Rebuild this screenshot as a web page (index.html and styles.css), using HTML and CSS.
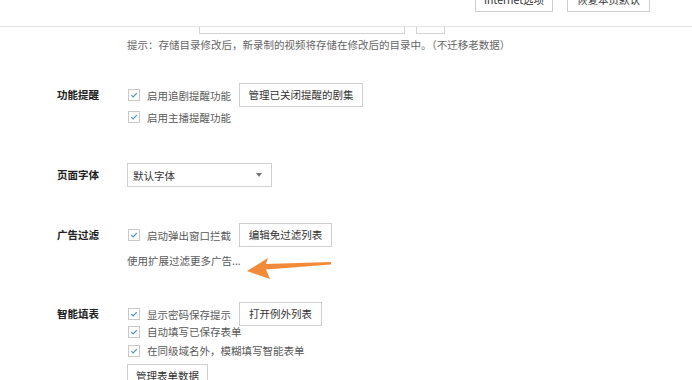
FILE: index.html
```html
<!DOCTYPE html>
<html lang="zh-CN">
<head>
    <meta charset="UTF-8">
    <title>设置</title>
    <link rel="stylesheet" href="styles.css">
</head>
<body>

<div class="topbar">
    <button class="btn btn-top">Internet选项</button>
    <button class="btn btn-top">恢复本页默认</button>
</div>

<div class="conteudo">
    <div class="linha-dir">
        <div class="caixa-dir"></div>
        <div class="caixa-mudar"></div>
    </div>
    <div class="dica">提示：存储目录修改后，新录制的视频将存储在修改后的目录中。（不迁移老数据）</div>

    <div class="secao s1">
        <div class="rotulo">功能提醒</div>
        <div class="opcoes">
            <div class="linha alta">
                <span class="check"><svg viewBox="0 0 12 12"><path d="M2.8 6.2 L5 8.4 L9.3 3.7"/></svg></span>
                <span class="texto">启用追剧提醒功能</span>
                <button class="btn b-juji">管理已关闭提醒的剧集</button>
            </div>
            <div class="linha">
                <span class="check"><svg viewBox="0 0 12 12"><path d="M2.8 6.2 L5 8.4 L9.3 3.7"/></svg></span>
                <span class="texto">启用主播提醒功能</span>
            </div>
        </div>
    </div>

    <div class="secao s2">
        <div class="rotulo">页面字体</div>
        <div class="opcoes">
            <div class="select">
                <span>默认字体</span>
                <span class="seta"></span>
            </div>
        </div>
    </div>

    <div class="secao s3">
        <div class="rotulo">广告过滤</div>
        <div class="opcoes">
            <div class="linha alta">
                <span class="check"><svg viewBox="0 0 12 12"><path d="M2.8 6.2 L5 8.4 L9.3 3.7"/></svg></span>
                <span class="texto">启动弹出窗口拦截</span>
                <button class="btn b-filtro">编辑免过滤列表</button>
            </div>
            <div class="linha link">使用扩展过滤更多广告...</div>
        </div>
    </div>

    <div class="secao s4">
        <div class="rotulo">智能填表</div>
        <div class="opcoes">
            <div class="linha alta primeira">
                <span class="check"><svg viewBox="0 0 12 12"><path d="M2.8 6.2 L5 8.4 L9.3 3.7"/></svg></span>
                <span class="texto">显示密码保存提示</span>
                <button class="btn b-excecao">打开例外列表</button>
            </div>
            <div class="linha curta">
                <span class="check"><svg viewBox="0 0 12 12"><path d="M2.8 6.2 L5 8.4 L9.3 3.7"/></svg></span>
                <span class="texto">自动填写已保存表单</span>
            </div>
            <div class="linha curta">
                <span class="check"><svg viewBox="0 0 12 12"><path d="M2.8 6.2 L5 8.4 L9.3 3.7"/></svg></span>
                <span class="texto">在同级域名外，模糊填写智能表单</span>
            </div>
            <div class="linha alta ultima">
                <button class="btn btn-solo">管理表单数据</button>
            </div>
        </div>
    </div>

    <svg class="seta-laranja" viewBox="0 0 100 30" width="100" height="30">
        <path d="M6 21 L27 8 L25 14 L90 12 L90 14.5 L25 19.5 L29 29 Z" fill="#f28a3a"/>
    </svg>
</div>

</body>
</html>
```

FILE: styles.css
```css
* {
    box-sizing: border-box;
}

body {
    margin: 0;
    background-color: #fff;
    font-family: "Noto Sans CJK SC", "Liberation Sans", sans-serif;
    font-size: 10.5px;
    color: #5a5a5a;
    width: 692px;
    height: 380px;
    overflow: hidden;
}

.topbar {
    height: 27px;
    border-bottom: 1px solid #e3e3e3;
    display: flex;
    justify-content: flex-end;
    gap: 14px;
    padding-right: 42px;
    overflow: hidden;
}

.btn {
    height: 24px;
    padding: 0;
    border: 1px solid #cfcfcf;
    background-color: #fff;
    color: #333;
    font-family: inherit;
    font-size: 10.5px;
    line-height: 22px;
    cursor: pointer;
    white-space: nowrap;
    text-align: center;
}

.btn-top {
    margin-top: -12px;
}

.btn-top:first-child {
    width: 78px;
}

.btn-top:last-child {
    width: 83px;
}

.b-juji {
    width: 124px;
}

.b-filtro {
    width: 93px;
}

.b-excecao {
    width: 83px;
}

.conteudo {
    position: relative;
    overflow: hidden;
    padding-left: 57px;
}

.linha-dir {
    display: flex;
    margin-top: -17px;
    padding-left: 142px;
}

.caixa-dir {
    width: 206px;
    height: 24px;
    border: 1px solid #d3d3d3;
}

.caixa-mudar {
    width: 29px;
    height: 24px;
    margin-left: 11px;
    border: 1px solid #d3d3d3;
}

.dica {
    margin-top: 3px;
    margin-left: 70px;
    line-height: 16px;
    color: #666;
}

.secao {
    display: flex;
}

.s1 { margin-top: 30px; }
.s2 { margin-top: 36px; }
.s3 { margin-top: 36px; }
.s4 { margin-top: 32px; }

.rotulo {
    width: 70px;
    line-height: 24px;
    font-weight: bold;
    color: #222;
}

.opcoes {
    display: flex;
    flex-direction: column;
}

.linha {
    height: 20px;
    display: flex;
    align-items: center;
}

.linha.alta {
    height: 24px;
}

.linha.primeira {
    margin-bottom: -4px;
}

.linha.curta {
    height: 19px;
}

.linha.ultima {
    margin-top: 4px;
}

.linha.link {
    margin-top: 3px;
}

.check {
    width: 12px;
    height: 12px;
    margin-left: 1px;
    border: 1px solid #c9c9c9;
    background-color: #fff;
    display: flex;
}

.check svg {
    width: 10px;
    height: 10px;
    fill: none;
    stroke: #4d8fd3;
    stroke-width: 1.4;
}

.texto {
    margin-left: 7px;
    width: 92px;
    white-space: nowrap;
}

.btn-solo {
    width: 81px;
}

.select {
    width: 145px;
    height: 24px;
    border: 1px solid #d0d0d0;
    display: flex;
    align-items: center;
    justify-content: space-between;
    padding: 0 9px 0 5px;
    color: #333;
}

.seta {
    width: 0;
    height: 0;
    border-left: 3.5px solid transparent;
    border-right: 3.5px solid transparent;
    border-top: 4px solid #777;
}

.seta-laranja {
    position: absolute;
    left: 241px;
    top: 223px;
}
```
